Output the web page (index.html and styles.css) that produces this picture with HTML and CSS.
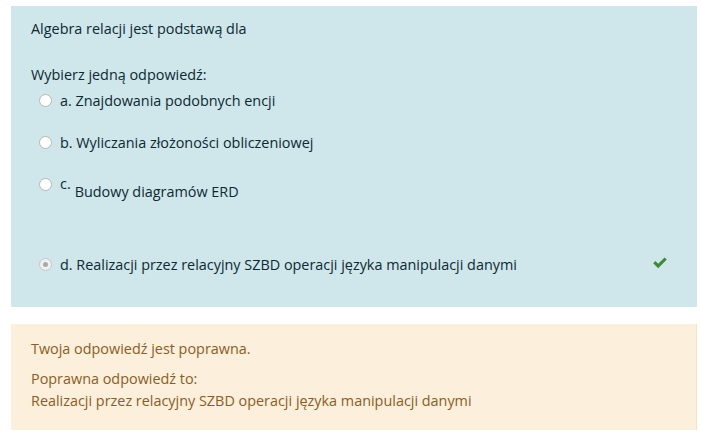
FILE: index.html
```html
<!DOCTYPE html>
<html lang="pl">
<head>
<meta charset="utf-8">
<link rel="stylesheet" href="styles.css">
</head>
<body>
<div class="page">
  <div class="formulation">
    <div class="qtext">Algebra relacji jest podstawą dla</div>
    <div class="prompt">Wybierz jedną odpowiedź:</div>
    <div class="answers">
      <div class="opt opt-a"><span class="radio"></span><span class="label">a. Znajdowania podobnych encji</span></div>
      <div class="opt opt-b"><span class="radio"></span><span class="label">b. Wyliczania złożoności obliczeniowej</span></div>
      <div class="opt opt-c"><span class="radio"></span><span class="label">c.</span><span class="ptext">Budowy diagramów ERD</span></div>
      <div class="opt opt-d"><span class="radio checked"></span><span class="label">d. Realizacji przez relacyjny SZBD operacji języka manipulacji danymi</span>
        <svg class="check" viewBox="0 0 16 13" width="16" height="13"><path d="M1.2 7.2 L3.4 5 L6.2 7.8 L12.6 1.4 L14.8 3.6 L6.2 12.2 Z" fill="#3d8b35"/></svg>
      </div>
    </div>
  </div>
  <div class="outcome">
    <div class="feedback">Twoja odpowiedź jest poprawna.</div>
    <div class="right">Poprawna odpowiedź to:<br>Realizacji przez relacyjny SZBD operacji języka manipulacji danymi</div>
  </div>
</div>
</body>
</html>
```
FILE: styles.css
```css
html, body { margin: 0; padding: 0; background: #fff; }
body { font-family: "Open Sans", "Noto Sans", sans-serif; font-size: 14.4px; line-height: 20px; }
.page { padding: 6px 4px 0 11px; }
.formulation {
  background: #cfe6ea;
  color: #0b2a33;
  padding: 13px 20px 32px 20px;
}
.qtext { height: 20px; }
.prompt { margin-top: 26px; height: 20px; }
.answers { margin-top: 6px; }
.opt { display: flex; align-items: flex-start; padding-left: 8px; }
.opt-a, .opt-b { height: 42px; }
.opt-c { height: 80px; }
.opt-d { height: 20px; padding-right: 9px; }
.radio {
  width: 11px; height: 11px; border: 1px solid #b4b8ba; border-radius: 50%;
  background: #fff; margin-top: 3px; margin-right: 8px; flex: none; box-sizing: content-box;
  position: relative;
}
.radio.checked { background: #eef0f0; border-color: #c4c7c8; }
.radio.checked::after {
  content: ""; position: absolute; left: 3px; top: 3px; width: 5px; height: 5px;
  border-radius: 50%; background: #a9acad;
}
.label { white-space: nowrap; }
.opt-c .label { margin-top: -1px; }
.ptext { margin-top: 7px; margin-left: 4px; white-space: nowrap; }
.check { margin-left: auto; margin-top: 1px; }
.outcome {
  margin-top: 17px;
  background: #fcefdc;
  border-right: 1px solid #f6e2c4;
  color: #8b5d1e;
  padding: 15px 20px 20px 20px;
  height: 71px;
}
.feedback { height: 20px; }
.right { margin-top: 9px; line-height: 22px; }
```
